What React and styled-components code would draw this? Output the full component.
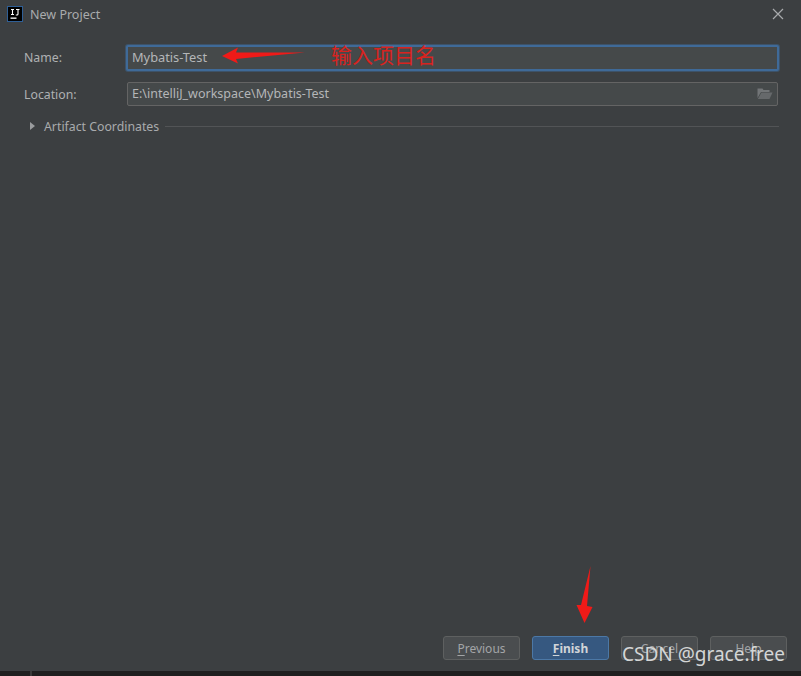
import React from 'react';
import styled, { createGlobalStyle } from 'styled-components';

const Global = createGlobalStyle`
    html, body {
        margin: 0;
        padding: 0;
        background: #3c3f41;
        overflow: hidden;
    }
`;

const Dialog = styled.div`
    position: relative;
    width: 801px;
    height: 676px;
    display: flex;
    flex-direction: column;
    background: #3c3f41;
    color: #bbbbbb;
    font-family: "Noto Sans", "Open Sans", sans-serif;
    font-size: 12.3px;
    overflow: hidden;
`;

const TitleBar = styled.div`
    box-sizing: border-box;
    height: 30px;
    display: flex;
    align-items: center;
    gap: 7px;
    padding: 0 17px 2px 7px;
    color: #a9abad;
    font-size: 12.5px;
`;

const TitleText = styled.span`
    flex: 1;
`;

const Form = styled.div`
    flex: 1;
    display: flex;
    flex-direction: column;
    padding: 15px 22px 0 24px;
`;

const Row = styled.div`
    display: grid;
    grid-template-columns: 102px 1fr;
    align-items: center;
    margin-bottom: ${(p) => p.$gap}px;
`;

const Label = styled.label`
    color: #afb1b3;
    padding-bottom: ${(p) => (p.$raised ? 2 : 0)}px;
`;

const Field = styled.div`
    display: flex;
    align-items: center;
    justify-content: space-between;
    box-sizing: border-box;
    height: ${(p) => (p.$focused ? 26 : 24)}px;
    margin: ${(p) => (p.$focused ? '0' : '0 1px')};
    padding: 0 4px ${(p) => (p.$focused ? 2 : 1)}px 4px;
    background: #45494a;
    border: ${(p) => (p.$focused ? '2px solid #3f6a98' : '1px solid #646464')};
    box-shadow: ${(p) => (p.$focused ? '0 0 0 1px rgba(63, 106, 152, 0.45)' : 'none')};
    border-radius: 2px;
    color: #b4b6b8;
    font-size: ${(p) => (p.$focused ? 12.8 : 12.5)}px;
`;

const Section = styled.div`
    display: flex;
    align-items: center;
    height: 16px;
    margin-top: 12px;
    color: #a9abad;
`;

const Caret = styled.span`
    width: 0;
    height: 0;
    margin: 0 9px 0 6px;
    border-left: 5px solid #9a9c9e;
    border-top: 4px solid transparent;
    border-bottom: 4px solid transparent;
`;

const Rule = styled.div`
    flex: 1;
    height: 1px;
    margin-left: 6px;
    background: #525456;
`;

const Footer = styled.div`
    display: flex;
    justify-content: flex-end;
    gap: 12px;
    padding: 0 14px 11px 0;
    font-size: 12px;
`;

const Button = styled.div`
    box-sizing: border-box;
    width: 77px;
    height: 24px;
    display: flex;
    align-items: center;
    justify-content: center;
    border-radius: 3px;
    border: 1px solid ${(p) => (p.$primary ? '#4c78a6' : '#5e6060')};
    background: ${(p) => (p.$primary ? '#365880' : '#4a4d4f')};
    color: ${(p) => (p.$primary ? '#d0d4d8' : '#a3a5a7')};
    font-weight: ${(p) => (p.$primary ? 700 : 400)};
    u {
        text-underline-offset: 2px;
    }
`;

const BottomStrip = styled.div`
    height: 5px;
    background: #1f1f1f;
    display: flex;
    padding-left: 30px;
`;

const StripTick = styled.span`
    width: 2px;
    background: #3a3a3a;
`;

const Annotation = styled.svg`
    position: absolute;
    left: 0;
    top: 0;
    pointer-events: none;
`;

const Note = styled.span`
    position: absolute;
    left: 331px;
    top: 40px;
    color: #d8231f;
    font-family: "Noto Sans CJK SC", sans-serif;
    font-size: 21px;
    line-height: 28px;
`;

const Watermark = styled.span`
    position: absolute;
    left: 622px;
    top: 639px;
    color: #d4d6d6;
    font-family: "Noto Sans", sans-serif;
    font-size: 19px;
    line-height: 30px;
    white-space: nowrap;
`;

const AppIcon = () => (
    <svg width="16" height="16" viewBox="0 0 16 16">
        <rect x="0.5" y="0.5" width="15" height="15" fill="#000" stroke="#2f5f96" />
        <path d="M4 3.5h3M5.5 3.5v5M4 8.5h3M9 3.5h3.5M11 3.5v4.5q0 1-1 1H8.8" fill="none" stroke="#fff" strokeWidth="1.1" />
        <rect x="3.5" y="11.5" width="6" height="1.3" fill="#fff" />
    </svg>
);

const CloseIcon = () => (
    <svg width="12" height="12" viewBox="0 0 12 12">
        <path d="M1 1l10 10M11 1L1 11" stroke="#a8aaac" strokeWidth="1.2" />
    </svg>
);

const FolderIcon = () => (
    <svg width="16" height="13" viewBox="0 0 16 13">
        <path d="M0.5 1.5h5l1 1.5h6v2H4L0.5 11z" fill="#727577" />
        <path d="M4.5 5.5h11l-3 6.5H0.8z" fill="#66696b" />
    </svg>
);

const App = () => {
    return (
        <Dialog>
            <Global />
            <TitleBar>
                <AppIcon />
                <TitleText>New Project</TitleText>
                <CloseIcon />
            </TitleBar>
            <Form>
                <Row $gap={11}>
                    <Label $raised>Name:</Label>
                    <Field $focused>Mybatis-Test</Field>
                </Row>
                <Row $gap={0}>
                    <Label>Location:</Label>
                    <Field>
                        E:\intelliJ_workspace\Mybatis-Test
                        <FolderIcon />
                    </Field>
                </Row>
                <Section>
                    <Caret />
                    Artifact Coordinates
                    <Rule />
                </Section>
            </Form>
            <Footer>
                <Button><span><u>P</u>revious</span></Button>
                <Button $primary><span><u>F</u>inish</span></Button>
                <Button>Cancel</Button>
                <Button>Help</Button>
            </Footer>
            <BottomStrip><StripTick /></BottomStrip>
            <Annotation width="801" height="676" viewBox="0 0 801 676">
                <path d="M222 56L238 47.5L236 52.5L305 52.5L236 59L238 63.5Z" fill="#f01a18" />
                <path d="M590.5 566L587 606L592.5 607L584.5 623L576.5 605L581 605Z" fill="#f01a18" />
            </Annotation>
            <Note>输入项目名</Note>
            <Watermark>CSDN @grace.free</Watermark>
        </Dialog>
    );
};

export default App;
